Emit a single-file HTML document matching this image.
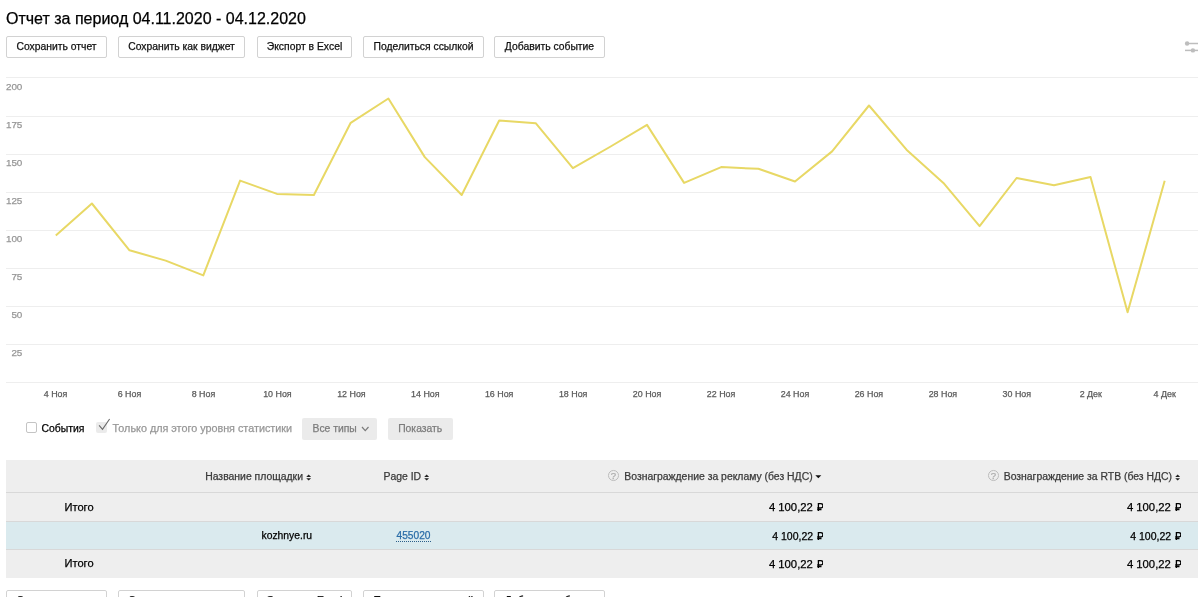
<!DOCTYPE html>
<html><head><meta charset="utf-8">
<style>
html,body{margin:0;padding:0;background:#fff;width:1203px;height:597px;overflow:hidden;position:relative;font-family:"Liberation Sans",sans-serif;}
#w{position:absolute;left:0;top:0;width:1203px;height:597px;will-change:transform;background:#fff;-webkit-text-stroke:0.25px currentColor;}
.a{position:absolute;white-space:nowrap;line-height:1;}
.btn{position:absolute;height:20px;border:1px solid #d2d2d2;border-radius:2px;background:#fff;box-sizing:content-box;font-size:10.35px;color:#111;text-align:center;line-height:20px;}
.btn span{position:absolute;left:0;right:0;top:0;}
.gl{position:absolute;left:6px;width:1192px;height:1px;background:#eeeeee;}
.yl{position:absolute;width:40px;left:-18px;text-align:right;font-size:9.9px;letter-spacing:-0.2px;color:#969696;line-height:1;}
.xl{position:absolute;width:60px;text-align:center;font-size:8.9px;color:#5a5a5a;line-height:1;top:390.4px;}
.th{font-size:10.42px;color:#3a3a3a;}
.rb{display:inline-block;vertical-align:baseline;margin-left:0.5px;}
.q{position:absolute;width:8.8px;height:8.8px;border:1.1px solid #bcbcbc;border-radius:50%;font-size:9.5px;color:#adadad;text-align:center;line-height:10.4px;}
.sort{position:absolute;width:6px;height:7px;}
</style></head>
<body>
<div id="w">
<div class="a" style="left:6px;top:10.8px;font-size:16px;color:#000;">Отчет за период 04.11.2020 - 04.12.2020</div>

<div class="btn" style="left:6px;top:36px;width:99px;">Сохранить отчет</div>
<div class="btn" style="left:118px;top:36px;width:125px;">Сохранить как виджет</div>
<div class="btn" style="left:257px;top:36px;width:93px;">Экспорт в Excel</div>
<div class="btn" style="left:363px;top:36px;width:119px;">Поделиться ссылкой</div>
<div class="btn" style="left:494px;top:36px;width:109px;">Добавить событие</div>

<svg class="a" style="left:1180px;top:36px" width="23" height="20" viewBox="0 0 23 20">
<g stroke="#bdbdbd" stroke-width="1.5" fill="#bdbdbd">
<line x1="5" y1="7.5" x2="18" y2="7.5"/><circle cx="7.1" cy="7.5" r="2.2" stroke="none"/>
<line x1="5" y1="14.4" x2="18" y2="14.4"/><circle cx="12.9" cy="14.4" r="2.2" stroke="none"/>
</g></svg>

<!-- chart -->
<div class="gl" style="top:77px"></div>
<div class="gl" style="top:116px"></div>
<div class="gl" style="top:154px"></div>
<div class="gl" style="top:192px"></div>
<div class="gl" style="top:230px"></div>
<div class="gl" style="top:268px"></div>
<div class="gl" style="top:306px"></div>
<div class="gl" style="top:344px"></div>
<div class="gl" style="top:382px"></div>

<div class="yl" style="top:82.4px">200</div>
<div class="yl" style="top:120.4px">175</div>
<div class="yl" style="top:158.4px">150</div>
<div class="yl" style="top:196.4px">125</div>
<div class="yl" style="top:234.4px">100</div>
<div class="yl" style="top:272.4px">75</div>
<div class="yl" style="top:310.4px">50</div>
<div class="yl" style="top:348.4px">25</div>

<svg class="a" style="left:0;top:0" width="1203" height="400" viewBox="0 0 1203 400">
<path d="M55.8,235.6 L91.9,203.5 L129.5,250.3 L165.7,260.6 L203.3,275.4 L240.1,180.6 L277,193.9 L313.9,195 L350.7,122.8 L388.4,98.5 L424.8,157.1 L461.7,195 L499.2,120.5 L535.7,123.2 L572.9,168.1 L609.8,147 L647,124.9 L684.1,182.9 L721.2,167.1 L758.4,168.8 L795,181.5 L832.1,151.4 L869,105.5 L906.5,149.7 L943.4,182.9 L979.6,226.1 L1016.6,178 L1054,185.3 L1090.5,177.1 L1127.6,312.3 L1164.7,180.8" fill="none" stroke="#e8d865" stroke-width="2" stroke-linejoin="round"/>
</svg>

<div class="xl" style="left:25.6px">4 Ноя</div>
<div class="xl" style="left:99.5px">6 Ноя</div>
<div class="xl" style="left:173.5px">8 Ноя</div>
<div class="xl" style="left:247.4px">10 Ноя</div>
<div class="xl" style="left:321.4px">12 Ноя</div>
<div class="xl" style="left:395.3px">14 Ноя</div>
<div class="xl" style="left:469.2px">16 Ноя</div>
<div class="xl" style="left:543.2px">18 Ноя</div>
<div class="xl" style="left:617.1px">20 Ноя</div>
<div class="xl" style="left:691.1px">22 Ноя</div>
<div class="xl" style="left:765px">24 Ноя</div>
<div class="xl" style="left:838.9px">26 Ноя</div>
<div class="xl" style="left:912.9px">28 Ноя</div>
<div class="xl" style="left:986.8px">30 Ноя</div>
<div class="xl" style="left:1060.8px">2 Дек</div>
<div class="xl" style="left:1134.7px">4 Дек</div>

<!-- filters -->
<div class="a" style="left:26px;top:422px;width:9px;height:9px;border:1px solid #c4c4c4;border-radius:2px;background:#fff;"></div>
<div class="a" style="left:41.5px;top:424.2px;font-size:10.4px;color:#000;">События</div>
<div class="a" style="left:96px;top:422px;width:11px;height:11px;border-radius:2px;background:#ebebeb;"></div>
<svg class="a" style="left:96px;top:417px" width="16" height="16" viewBox="0 0 16 16"><path d="M3.1,8.4 L6.5,12.3 L13.6,2.0" fill="none" stroke="#6a6a6a" stroke-width="1.1"/></svg>
<div class="a" style="left:112.6px;top:422.9px;font-size:10.8px;color:#979797;">Только для этого уровня статистики</div>

<div class="a" style="left:302px;top:418px;width:75px;height:22px;border-radius:2px;background:#ebebeb;"></div>
<div class="a" style="left:312.5px;top:424.4px;font-size:10.35px;color:#7c7c7c;">Все типы</div>
<svg class="a" style="left:360px;top:424px" width="11" height="9" viewBox="0 0 11 9"><path d="M2,3 L5.25,6.6 L8.5,3" fill="none" stroke="#7a7a7a" stroke-width="1.2"/></svg>
<div class="a" style="left:388px;top:418px;width:65px;height:22px;border-radius:2px;background:#ebebeb;"></div>
<div class="a" style="left:398.2px;top:424.4px;font-size:10.35px;color:#7c7c7c;">Показать</div>

<!-- table -->
<div class="a" style="left:6px;top:460px;width:1192px;height:32px;background:#eeeeee;"></div>
<div class="a" style="left:6px;top:492px;width:1192px;height:1px;background:#d8d8d8;"></div>
<div class="a" style="left:6px;top:493px;width:1192px;height:28px;background:#eeeeee;"></div>
<div class="a" style="left:6px;top:521px;width:1192px;height:1px;background:#d8d8d8;"></div>
<div class="a" style="left:6px;top:522px;width:1192px;height:27px;background:#daeaee;"></div>
<div class="a" style="left:6px;top:549px;width:1192px;height:1px;background:#d8d8d8;"></div>
<div class="a" style="left:6px;top:550px;width:1192px;height:28px;background:#eeeeee;"></div>

<div class="a th" style="left:205.2px;top:472.3px;">Название площадки</div>
<div class="sort" style="left:306.0px;top:473.5px;"><svg width="6" height="7" viewBox="0 0 6 7" style="display:block"><path d="M0.2,3.1 L2.65,0.4 L5.1,3.1Z M0.2,4.2 L5.1,4.2 L2.65,6.5Z" fill="#222"/></svg></div>
<div class="a th" style="left:383.5px;top:472.3px;">Page ID</div>
<div class="sort" style="left:424.0px;top:473.5px;"><svg width="6" height="7" viewBox="0 0 6 7" style="display:block"><path d="M0.2,3.1 L2.65,0.4 L5.1,3.1Z M0.2,4.2 L5.1,4.2 L2.65,6.5Z" fill="#222"/></svg></div>
<div class="q" style="left:608px;top:470px;">?</div>
<div class="a th" style="left:624.3px;top:472.3px;">Вознаграждение за рекламу (без НДС)</div>
<svg class="a" style="left:815px;top:475px" width="7" height="4" viewBox="0 0 7 4"><path d="M0.3,0.2 L6.3,0.2 L3.3,3.2Z" fill="#111"/></svg>
<div class="q" style="left:988px;top:470px;">?</div>
<div class="a th" style="left:1003.7px;top:472.3px;">Вознаграждение за RTB (без НДС)</div>
<div class="sort" style="left:1175.0px;top:473.5px;"><svg width="6" height="7" viewBox="0 0 6 7" style="display:block"><path d="M0.2,3.1 L2.65,0.4 L5.1,3.1Z M0.2,4.2 L5.1,4.2 L2.65,6.5Z" fill="#222"/></svg></div>

<div class="a" style="left:64.5px;top:501.5px;font-size:11.1px;color:#000;">Итого</div>
<div class="a" style="right:380px;top:502.4px;font-size:11.3px;color:#000;">4 100,22 <svg class="rb" width="6.5" height="8" viewBox="0 0 6.5 8"><path d="M1.4,8V0.65H3.9C5.2,0.65 5.9,1.5 5.9,2.8S5.2,4.95 3.9,4.95H0.2M0.2,6.5H4.5" fill="none" stroke="#000" stroke-width="1.3"/></svg></div>
<div class="a" style="right:22px;top:502.4px;font-size:11.3px;color:#000;">4 100,22 <svg class="rb" width="6.5" height="8" viewBox="0 0 6.5 8"><path d="M1.4,8V0.65H3.9C5.2,0.65 5.9,1.5 5.9,2.8S5.2,4.95 3.9,4.95H0.2M0.2,6.5H4.5" fill="none" stroke="#000" stroke-width="1.3"/></svg></div>

<div class="a" style="left:261.5px;top:530.8px;font-size:10.35px;color:#000;">kozhnye.ru</div>
<div class="a" style="left:396.5px;top:531px;font-size:10.2px;color:#2a6da8;">455020</div>
<div class="a" style="left:396px;top:541px;width:34.5px;height:0;border-top:1px dotted #2c5f8a;"></div>
<div class="a" style="right:380px;top:530.5px;font-size:10.5px;color:#000;">4 100,22 <svg class="rb" width="6.5" height="8" viewBox="0 0 6.5 8"><path d="M1.4,8V0.65H3.9C5.2,0.65 5.9,1.5 5.9,2.8S5.2,4.95 3.9,4.95H0.2M0.2,6.5H4.5" fill="none" stroke="#000" stroke-width="1.3"/></svg></div>
<div class="a" style="right:22px;top:530.5px;font-size:10.5px;color:#000;">4 100,22 <svg class="rb" width="6.5" height="8" viewBox="0 0 6.5 8"><path d="M1.4,8V0.65H3.9C5.2,0.65 5.9,1.5 5.9,2.8S5.2,4.95 3.9,4.95H0.2M0.2,6.5H4.5" fill="none" stroke="#000" stroke-width="1.3"/></svg></div>

<div class="a" style="left:64.5px;top:558.3px;font-size:11.1px;color:#000;">Итого</div>
<div class="a" style="right:380px;top:559.3px;font-size:11.3px;color:#000;">4 100,22 <svg class="rb" width="6.5" height="8" viewBox="0 0 6.5 8"><path d="M1.4,8V0.65H3.9C5.2,0.65 5.9,1.5 5.9,2.8S5.2,4.95 3.9,4.95H0.2M0.2,6.5H4.5" fill="none" stroke="#000" stroke-width="1.3"/></svg></div>
<div class="a" style="right:22px;top:559.3px;font-size:11.3px;color:#000;">4 100,22 <svg class="rb" width="6.5" height="8" viewBox="0 0 6.5 8"><path d="M1.4,8V0.65H3.9C5.2,0.65 5.9,1.5 5.9,2.8S5.2,4.95 3.9,4.95H0.2M0.2,6.5H4.5" fill="none" stroke="#000" stroke-width="1.3"/></svg></div>

<div class="btn" style="left:6px;top:590px;width:99px;">Сохранить отчет</div>
<div class="btn" style="left:118px;top:590px;width:125px;">Сохранить как виджет</div>
<div class="btn" style="left:257px;top:590px;width:93px;">Экспорт в Excel</div>
<div class="btn" style="left:363px;top:590px;width:119px;">Поделиться ссылкой</div>
<div class="btn" style="left:494px;top:590px;width:109px;">Добавить событие</div>
</div>
</body></html>
